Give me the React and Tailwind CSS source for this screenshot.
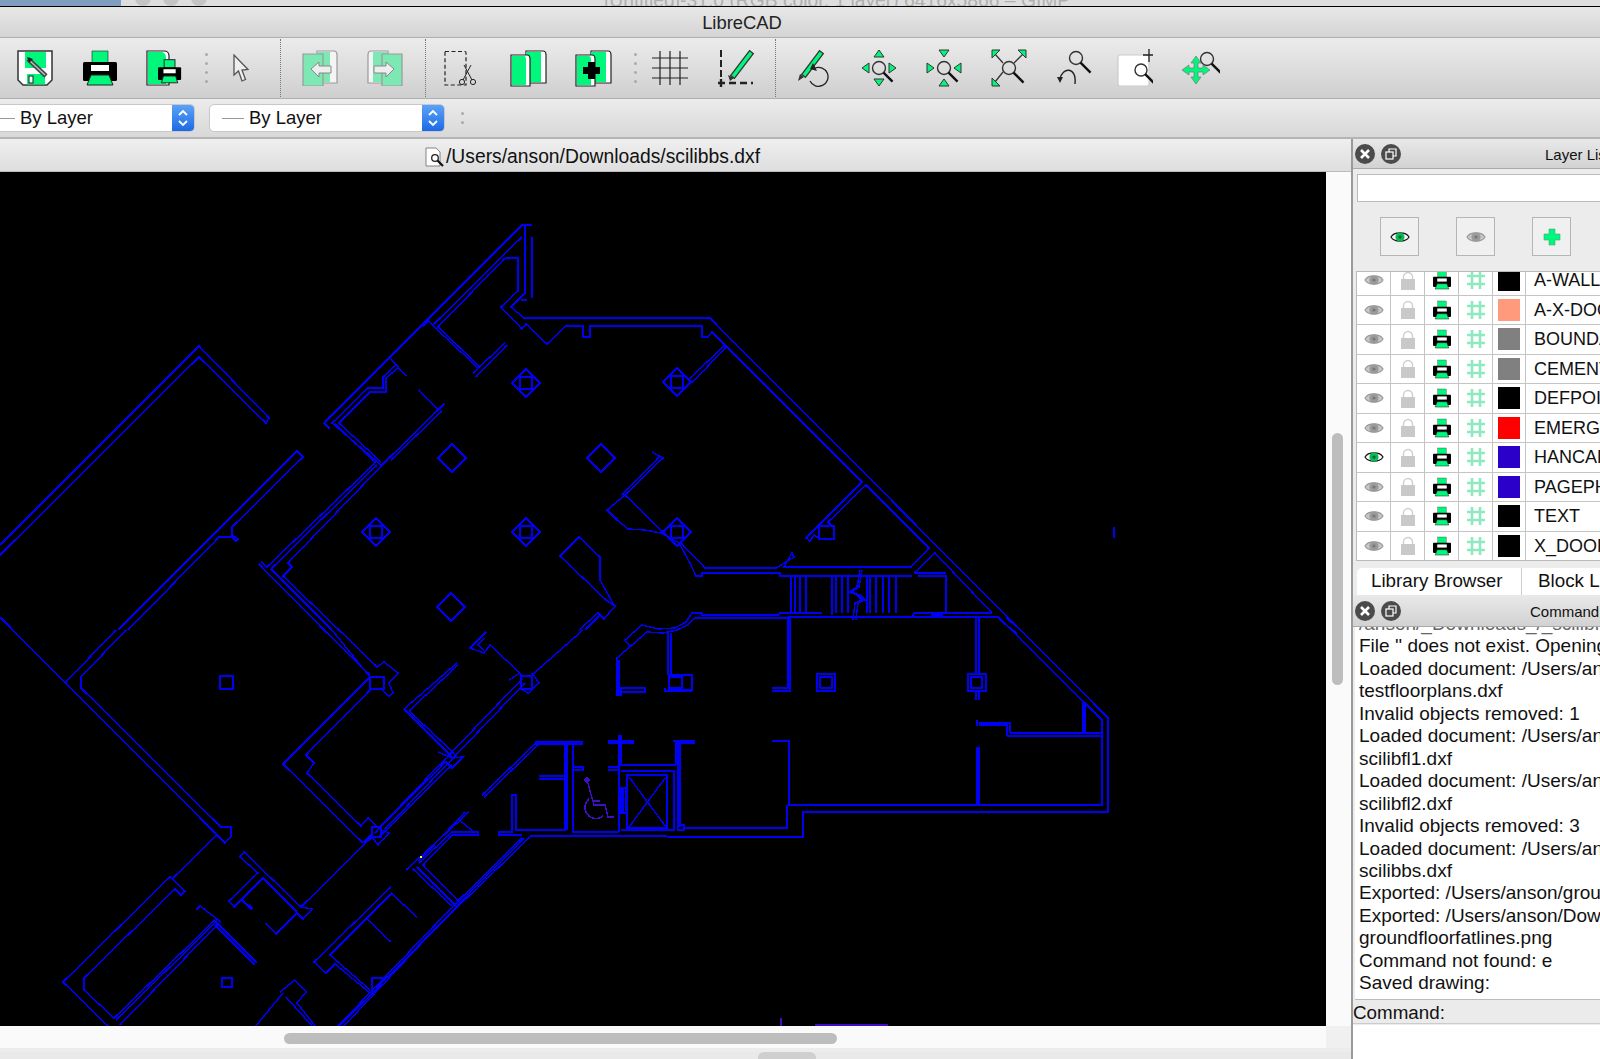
import React from "react";

const G = "#00f77c";
const BLUE = "#0000f2";
const PURPLE = "#3f0fc4";

// floor plan, page coordinates (viewBox starts at the canvas corner)
const WALLS = [
  "M0 545L199 346L269 418L266 423L199 357L0 555",
  "M297 451L118 630M297 451L303 457L232 527V535L238 539L236 541L232 537H219L128 630",
  "M0 617L217 835M65 683L116 630M81 677L126 630M81 677V688L221 827H231V836L225 843L217 835",
  "M217 835L173 878M170 877L63 982L109 1027M170 877L185 891L181 895L175 889L84 978V990L114 1018",
  "M114 1018L215 920M116 1020L217 921M120 1025L219 923M196 910L200 906L221 922M215 925L255 965M217 923L257 963",
  "M522 225L324 423M522 225H532M525 225V293L511 307L524 318H710L1108 718V812H803V837H667",
  "M532 237V298M521 300H527M522 237L433 325",
  "M505 258H518V291L501 307L522 329L526 324L547 344L566 326H583V337H590V326H702V337H708L712 332L862 482L806 538L810 541L814 535L820 539",
  "M505 258L438 327M427 320L478 368M438 327L480 367M473 373L505 343M476 377L507 345M423 326L429 321",
  "M391 359L406 376M396 365L383 377V388H368L332 423L381 465M398 368L386 378V392H370L339 423L381 462M335 424L376 463",
  "M324 423L330 429M419 390L438 410L444 404M438 410L389 458L381 465M442 411L391 460",
  "M375 463L267 567M377 465L271 569M387 460L288 563L292 567L283 576L339 630M259 564L324 630M261 562L267 567M271 569L332 630",
  "M324 630L370 675M332 630L370 677M339 630L377 667L384 662L398 673L389 683L393 693L389 696L381 689",
  "M370 677H384V689H370ZM370 677L283 764L363 843M372 688L306 755L314 763L307 773L361 826L368 818L379 828",
  "M372 827H381V837H372ZM381 830L389 833L378 845L372 837M363 843L372 834",
  "M379 828L522 679M385 829L525 683M532 675L583 630M521 676H532V689H521ZM509 680L520 673M532 673L539 683L528 693L521 689",
  "M486 632L470 648L484 653L490 645L522 675M484 638L478 645L484 650",
  "M579 630L598 613L604 619L615 606L606 600L560 556L579 537L600 557V580L614 605M585 630L600 615",
  "M482 795L537 742M484 797L539 744M404 709L457 663M409 711L458 665M404 709L452 757M409 711L456 755",
  "M438 752L452 758L463 757L452 768L446 762M446 761L375 833M452 765L379 837",
  "M372 837L301 907L244 852L240 857L258 873L229 901L234 907L263 878L297 912M301 907L312 909L303 919L297 913L276 934L266 923M242 900L252 910M249 905L253 909",
  "M469 812L406 870M465 812L419 861M452 832H478V835H452L423 865M459 820L473 831M452 832L419 863",
  "M417 867L457 907M423 865L459 902M413 869L452 906",
  "M530 837L436 928L343 1027M522 838L459 900L337 1027M524 838L461 902L339 1027",
  "M391 887L314 962L326 973L335 964L370 993M392 893L330 955L370 990M391 893L417 917M366 918L391 942M372 993V978H385",
  "M295 980L306 992L297 1003L316 1027M280 992L295 980M283 993L255 1027M286 997L313 1027",
  "M688 380L725 345M692 383L726 347M866 485L828 522L832 526M819 526H834V539H819Z",
  "M866 485L929 548L911 567H784L792 553L794 557L776 568H705L681 543",
  "M935 553L914 573M935 553L992 613M912 576H780V573H702V576H696L690 563L679 543L661 533L645 530L628 529L617 520L607 510L625 495L663 458L652 452",
  "M622 495L660 456M625 495L663 532M616 517L618 521",
  "M992 613H914L912 617M822 613H780L778 615H702V613H692L686 622L675 628L658 629L642 625L625 640L631 647",
  "M694 618H788M694 618L688 625L677 630L663 633L647 632L617 658V695H621V688H645V692H621M619 660V695",
  "M668 633V675M671 633V675M669 675H692V690H669ZM669 677H682V688H669ZM665 688V691H692",
  "M817 674H835V691H817ZM820 677H832V688H820ZM968 674H986V691H968ZM971 677H982V688H971Z",
  "M976 617V674M979 617V674M976 691V700M979 691V700M788 618V688H772M790 617V691H772M788 617H998L1102 720V805H789V741H772M787 805V828H684",
  "M914 573H946M918 576H946V613M931 615H943M1002 622L1017 633M1006 618L1021 630",
  "M832 576V615M860 570L857 587L849 592L857 595L862 600L855 603L853 620M862 570L859 587L852 592L860 595L865 600L858 603L856 620",
  "M791 576V613M795 576V613M800 576V613M806 576V613M836 576V613M842 576V613M848 576V613M867 576V613M870 576V613M876 576V613M883 576V613M889 576V613M896 576V613",
  "M1083 702V733M1085 703L1102 720M1085 703V733M1010 733H1102M1007 736H1102M977 720V726M979 723H1010V733M979 725H1007V736M977 747V805M979 747V805",
  "M530 836H667M535 742H583M535 744H583M565 742V830H516V795H512V832H499V835H522M567 742V830M539 776H565M539 779H565",
  "M573 742V832H619M573 767H583V770H573M619 735V832M621 735V765H676M608 741H634M608 743H634M608 767H619M608 770H619",
  "M676 742V765M680 742V827M678 742V827M673 741H695M680 743H695M621 771H674V830H621M627 775H667V828H627Z",
  "M629 777L666 827M666 777L629 827M621 788H626V813H621ZM623 788V813M678 825H684V830H678ZM684 828H787",
];

const Canvas = () => (
  <svg viewBox="0 172 1326 854" className="block h-[854px] w-[1326px] bg-black" shapeRendering="crispEdges" fill="none">
    <path d={WALLS.join("")} stroke={BLUE} strokeWidth="1.5" />
    {[[526, 383], [376, 532], [526, 532], [677, 382], [677, 532]].map(([x, y]) => (
      <g key={x + "-" + y} stroke={BLUE} strokeWidth="1.5">
        <path d={`M${x} ${y - 14}L${x + 14} ${y}L${x} ${y + 14}L${x - 14} ${y}Z`} />
        <rect x={x - 6} y={y - 6} width="12" height="12" strokeWidth="1.6" />
      </g>
    ))}
    {[[452, 458], [601, 458], [451, 607]].map(([x, y]) => (
      <path key={x} d={`M${x} ${y - 14}L${x + 14} ${y}L${x} ${y + 14}L${x - 14} ${y}Z`} stroke={BLUE} strokeWidth="1.5" />
    ))}
    <rect x="220" y="676" width="13" height="13" stroke={BLUE} strokeWidth="1.5" />
    <rect x="222" y="978" width="10" height="9" stroke={BLUE} strokeWidth="1.5" />
    <path d="M1114 527V538" stroke={BLUE} strokeWidth="1.3" />
    <g stroke={PURPLE} strokeWidth="1.4">
      <path d="M587 780L592 798L594 805H605L608 817H614M592 801H600" />
      <path d="M589 799A11 11 0 1 0 603 816" />
      <circle cx="587" cy="780" r="2" fill={PURPLE} />
      <path d="M781 1018V1026M815 1025H888" />
    </g>
    <rect x="420" y="856" width="1.5" height="1.5" fill="#ffff00" />
  </svg>
);

const PrinterIcon = ({ className }) => (
  <svg viewBox="0 0 34 36" className={className}>
    <rect x="9" y="1" width="16" height="12" fill={G} stroke="#222" strokeWidth="0.6" />
    <rect x="0" y="12" width="34" height="19" rx="1.5" fill="#000" />
    <rect x="8" y="15" width="18" height="6" fill="#fff" />
    <path d="M8 25H26L30 35H4Z" fill={G} stroke="#222" strokeWidth="1" />
  </svg>
);

const SaveIcon = () => (
  <svg viewBox="0 0 36 36" className="h-[36px] w-[36px]">
    <path d="M1 1H35V30L30 35H6L1 30Z" fill="#fff" stroke="#333" strokeWidth="1.5" />
    <rect x="8" y="2" width="21" height="16" fill={G} />
    <rect x="10" y="24" width="18" height="10.5" fill={G} />
    <rect x="12" y="26" width="4" height="7" fill="#fff" stroke="#222" />
    <path d="M11 9L29 26" stroke="#444" strokeWidth="4.5" />
    <path d="M12 10L28 25" stroke="#bbb" strokeWidth="1.5" />
    <path d="M10 7L16 9L12 13Z" fill="#222" />
  </svg>
);

const PreviewIcon = () => (
  <svg viewBox="0 0 36 36" className="h-[36px] w-[36px]">
    <path d="M1 1H18Q23 1 23 6V35H1Z" fill="#fff" stroke="#222" strokeWidth="1.2" />
    <path d="M2 2H16Q20 3 20 8V34H2Z" fill={G} />
    <g transform="translate(12 9) scale(0.68)">
      <rect x="9" y="1" width="16" height="12" fill={G} stroke="#222" strokeWidth="1.4" />
      <rect x="0" y="12" width="34" height="19" rx="1.5" fill="#000" />
      <rect x="8" y="15" width="18" height="6" fill="#fff" />
      <path d="M8 25H26L29 35H5Z" fill={G} stroke="#222" strokeWidth="1.4" />
    </g>
  </svg>
);

const CursorIcon = () => (
  <svg viewBox="0 0 16 28" className="h-[28px] w-[16px]">
    <path d="M1 1V21L5.5 17L9 27L12.5 25.5L9 16L15 15.5Z" fill="#eee" stroke="#555" strokeWidth="1.3" />
  </svg>
);

const PrevIcon = ({ flip }) => (
  <svg viewBox="0 0 36 36" className="h-[36px] w-[36px]">
    <g transform={flip ? "translate(36 0) scale(-1 1)" : undefined}>
      <path d="M15 1H32Q35 1 35 5V33H15Z" fill="#f4f4f4" stroke="#999" strokeWidth="1.2" />
      <path d={flip ? "M15 2H30V32H15Z" : "M15 2H28V32H15Z"} fill="#7ee8b4" />
      <path d="M1 4H21V36H1Z" fill="#7ee8b4" stroke="#999" strokeWidth="1.2" />
      <path d="M9 19L17 12V16H29V23H17V27Z" fill="#eee" stroke="#888" />
    </g>
  </svg>
);

const CutIcon = () => (
  <svg viewBox="0 0 36 36" className="h-[36px] w-[36px]">
    <path d="M1 1.5H21Q22 1.5 22 3V35H1Z" fill="none" stroke="#222" strokeWidth="1.2" strokeDasharray="4 2.5" />
    <path d="M20 15L28 30M27 15L19 30" stroke="#222" strokeWidth="1" />
    <circle cx="18" cy="32" r="2.6" fill="none" stroke="#222" />
    <circle cx="29" cy="32" r="2.6" fill="none" stroke="#222" />
  </svg>
);

const CopyIcon = ({ plus }) => (
  <svg viewBox="0 0 37 37" className="h-[37px] w-[37px]">
    <path d="M16 1H33Q36 1 36 5V33H16Z" fill="#fff" stroke="#222" strokeWidth="1.2" />
    <path d="M16 2H31V32H16Z" fill={G} />
    <path d="M1 5H17Q20 5 20 9V36H1Z" fill="#fff" stroke="#222" strokeWidth="1.2" />
    <path d="M2 6H14Q16 6 16 10V35H2Z" fill={G} />
    {plus && <path d="M13 12H20V17H25V24H20V29H13V24H8V17H13Z" fill="#000" />}
  </svg>
);

const GridIcon = () => (
  <svg viewBox="0 0 36 36" className="h-[36px] w-[36px]" stroke="#222" strokeWidth="1.2">
    <path d="M8 1V35M18 1V35M28 1V35M0 8H36M0 18H36M0 28H36" />
  </svg>
);

const Pencil = ({ d = "M14 27L32 4" }) => (
  <g>
    <path d={d} stroke="#333" strokeWidth="6" strokeLinecap="square" />
    <path d={d} stroke={G} strokeWidth="3.4" strokeLinecap="square" />
  </g>
);

const DraftIcon = () => (
  <svg viewBox="0 0 38 38" className="h-[38px] w-[38px]" fill="none">
    <Pencil d="M17 26L33 5" />
    <path d="M11 26L13 32L17 29Z" fill="#333" />
    <path d="M4 1V29" stroke="#222" strokeWidth="2" strokeDasharray="7 3" />
    <path d="M1 34H8M4 30V38" stroke="#222" strokeWidth="2.4" />
    <path d="M12 34H36" stroke="#222" strokeWidth="2.4" strokeDasharray="7 4" />
  </svg>
);

const RotateIcon = () => (
  <svg viewBox="0 0 36 38" className="h-[38px] w-[36px]" fill="none">
    <Pencil d="M8 25L23 5" />
    <path d="M1 32L3 25L7 28Z" fill="#333" />
    <path d="M18 19A9.5 9.5 0 1 1 13 32" stroke="#222" strokeWidth="1.3" />
    <path d="M16 14L20 22L13 20Z" fill="#222" />
  </svg>
);

const Glass = ({ x, y, r = 6, len = 10 }) => (
  <g fill="none">
    <circle cx={x} cy={y} r={r} stroke="#333" strokeWidth="1.4" />
    <path d={`M${x + r * 0.7} ${y + r * 0.7}l${len} ${len}`} stroke="#111" strokeWidth="2.4" />
  </g>
);

const Tri = ({ d }) => <path d={d} fill={G} stroke="#333" strokeWidth="1" />;

const ZoomInIcon = () => (
  <svg viewBox="0 0 36 38" className="h-[38px] w-[36px]">
    <Glass x={18} y={19} r={6.5} len={9} />
    <Tri d="M18 1L23 8H13Z" />
    <Tri d="M18 37L13 30H23Z" />
    <Tri d="M1 19L8 14V24Z" />
    <Tri d="M35 19L28 14V24Z" />
  </svg>
);

const ZoomOutIcon = () => (
  <svg viewBox="0 0 36 38" className="h-[38px] w-[36px]">
    <Glass x={18} y={19} r={6.5} len={9} />
    <Tri d="M13 1H23L18 8Z" />
    <Tri d="M13 37H23L18 30Z" />
    <Tri d="M1 14L8 19L1 24Z" />
    <Tri d="M35 14L28 19L35 24Z" />
  </svg>
);

const ZoomAutoIcon = () => (
  <svg viewBox="0 0 38 38" className="h-[38px] w-[38px]">
    <path d="M5 5L13 14M33 5L24 14M5 33L13 23" stroke="#333" strokeWidth="1.3" />
    <Glass x={19} y={19} r={6.5} len={10} />
    <Tri d="M2 1H10L2 9Z" />
    <Tri d="M36 1H28L36 9Z" />
    <Tri d="M2 37V29L10 37Z" />
  </svg>
);

const ZoomPrevIcon = () => (
  <svg viewBox="0 0 36 38" className="h-[38px] w-[36px]" fill="none">
    <Glass x={20} y={9} r={6.5} len={10} />
    <path d="M4 30C6 18 21 17 19 35" stroke="#222" strokeWidth="1.4" />
    <path d="M1 28H7L4 34Z" fill="#222" />
  </svg>
);

const ZoomWinIcon = () => (
  <svg viewBox="0 0 36 38" className="h-[38px] w-[36px]">
    <rect x="1" y="6" width="31" height="31" rx="2" fill="#fff" stroke="#ccc" strokeWidth="1.2" />
    <Glass x={24} y={21} r={6} len={9} />
    <path d="M32 0V13M26 6H36" stroke="#222" strokeWidth="1.3" />
  </svg>
);

const ZoomPanIcon = () => (
  <svg viewBox="0 0 38 38" className="h-[38px] w-[38px]">
    <Glass x={25} y={10} r={6.5} len={11} />
    <path d="M14 7L19 14H16V19H21V16L28 21L21 26V23H16V28H19L14 35L9 28H12V23H7V26L0 21L7 16V19H12V14H9Z" fill={G} stroke="#777" strokeWidth="0.7" />
  </svg>
);

const Slot = ({ className, children }) => <div className={`flex shrink-0 items-center justify-center ${className}`}>{children}</div>;

const DotSep = ({ className }) => (
  <div className={`flex shrink-0 justify-center ${className}`}>
    <div className="h-[58px] border-l border-dotted border-[#777]" />
  </div>
);

const GripSep = ({ className }) => (
  <div className={`flex shrink-0 flex-col items-center justify-center gap-[6px] ${className}`}>
    {[0, 1, 2, 3].map((i) => <span key={i} className="h-[3px] w-[3px] rounded-full bg-[#aaa]" />)}
  </div>
);

const Toolbar = () => (
  <div className="flex h-[61px] items-center border-b border-[#aeaeae] bg-gradient-to-b from-[#ececec] to-[#cfcfcf] pl-[3px]">
    <Slot className="w-[64px]"><SaveIcon /></Slot>
    <Slot className="w-[66px]"><PrinterIcon className="h-[36px] w-[34px]" /></Slot>
    <Slot className="w-[62px]"><PreviewIcon /></Slot>
    <GripSep className="w-[22px]" />
    <Slot className="w-[48px]"><CursorIcon /></Slot>
    <DotSep className="w-[30px]" />
    <Slot className="w-[50px]"><PrevIcon /></Slot>
    <Slot className="w-[80px]"><PrevIcon flip /></Slot>
    <DotSep className="w-[1px]" />
    <Slot className="w-[71px]"><CutIcon /></Slot>
    <Slot className="w-[62px]"><CopyIcon /></Slot>
    <Slot className="w-[68px]"><CopyIcon plus /></Slot>
    <GripSep className="w-[16px]" />
    <Slot className="w-[54px]"><GridIcon /></Slot>
    <Slot className="w-[78px]"><DraftIcon /></Slot>
    <DotSep className="w-[1px]" />
    <Slot className="w-[77px]"><RotateIcon /></Slot>
    <Slot className="w-[52px]"><ZoomInIcon /></Slot>
    <Slot className="w-[78px]"><ZoomOutIcon /></Slot>
    <Slot className="w-[52px]"><ZoomAutoIcon /></Slot>
    <Slot className="w-[78px]"><ZoomPrevIcon /></Slot>
    <Slot className="w-[44px]"><ZoomWinIcon /></Slot>
    <Slot className="w-[88px]"><ZoomPanIcon /></Slot>
  </div>
);

const Chevrons = () => (
  <svg viewBox="0 0 14 22" className="h-[22px] w-[14px]" fill="none" stroke="#fff" strokeWidth="1.8">
    <path d="M3 8L7 4L11 8M3 14L7 18L11 14" />
  </svg>
);

const ComboBox = ({ className, lineClass }) => (
  <div className={`flex h-[28px] items-stretch overflow-hidden border border-[#c8c8c8] bg-white ${className}`}>
    <div className="flex flex-1 items-center">
      <span className={`h-[1px] bg-[#999] ${lineClass}`} />
      <span className="ml-[5px] text-[18.5px] leading-none text-[#111]">By Layer</span>
    </div>
    <div className="flex w-[22px] items-center justify-center bg-gradient-to-b from-[#5aa2f7] to-[#1c6ae4]">
      <Chevrons />
    </div>
  </div>
);

const OptionBar = () => (
  <div className="flex h-[40px] items-center border-b-2 border-[#b5b5b5] bg-gradient-to-b from-[#ececec] to-[#d8d8d8]">
    <ComboBox className="w-[195px] rounded-r-[5px] border-l-0" lineClass="w-[15px]" />
    <ComboBox className="ml-[14px] w-[236px] rounded-[5px]" lineClass="ml-[12px] w-[22px]" />
    <div className="ml-[16px] flex flex-col gap-[6px]">
      <span className="h-[3px] w-[3px] rounded-full bg-[#aaa]" />
      <span className="h-[3px] w-[3px] rounded-full bg-[#aaa]" />
    </div>
  </div>
);

const DocIcon = () => (
  <svg viewBox="0 0 20 20" className="h-[20px] w-[20px]">
    <path d="M1 1H11L15 5V19H1Z" fill="#fff" stroke="#777" strokeWidth="0.9" />
    <circle cx="10" cy="11" r="3.3" fill="#fff" stroke="#222" strokeWidth="1.3" />
    <path d="M12.5 13.5L18 19" stroke="#111" strokeWidth="2.2" />
  </svg>
);

const EyeIcon = ({ on, className = "h-[16px] w-[20px]" }) => (
  <svg viewBox="0 0 20 14" className={className}>
    <path d="M1 7C4 1.5 16 1.5 19 7C16 12.5 4 12.5 1 7Z" fill={on ? "#fff" : "#c8c8c8"} stroke={on ? "#111" : "#999"} strokeWidth="1.2" />
    <circle cx="10" cy="7" r="4.6" fill={on ? "#0cb855" : "#9a9a9a"} />
    <circle cx="10" cy="7" r="1.6" fill={on ? "#063" : "#777"} />
  </svg>
);

const LockIcon = () => (
  <svg viewBox="0 0 16 19" className="h-[19px] w-[16px]" fill="none">
    <path d="M3.5 9V6A4.5 4.5 0 0 1 12.5 6V9" stroke="#cfcfcf" strokeWidth="1.4" />
    <rect x="1" y="8" width="14" height="11" fill="#c9c9c9" />
  </svg>
);

const HashIcon = () => (
  <svg viewBox="0 0 20 20" className="h-[20px] w-[20px]" stroke="#8fe9c0" strokeWidth="2.6">
    <path d="M6 1V19M14 1V19M1 6H19M1 14H19" />
  </svg>
);

const DockHead = ({ title, titleClass, className }) => (
  <div className={`flex items-center overflow-hidden border-b border-[#aaa] bg-gradient-to-b from-[#e9e9e9] to-[#d2d2d2] pl-[2px] ${className}`}>
    <span className="flex h-[20px] w-[20px] shrink-0 items-center justify-center rounded-full bg-[#4b4b4b]">
      <svg viewBox="0 0 12 12" className="h-[12px] w-[12px]" stroke="#fff" strokeWidth="2.6">
        <path d="M2 2L10 10M10 2L2 10" />
      </svg>
    </span>
    <span className="ml-[6px] flex h-[20px] w-[20px] shrink-0 items-center justify-center rounded-full bg-[#4b4b4b]">
      <svg viewBox="0 0 12 12" className="h-[12px] w-[12px]" fill="none" stroke="#fff" strokeWidth="1.2">
        <rect x="1" y="4" width="7" height="7" />
        <path d="M4 4V1H11V8H8" />
      </svg>
    </span>
    <span className={`mt-[2px] shrink-0 whitespace-nowrap text-[15px] leading-none text-[#111] ${titleClass}`}>{title}</span>
  </div>
);

const LAYERS = [
  ["A-WALL", "bg-black"],
  ["A-X-DOOR", "bg-[#ff9b7c]"],
  ["BOUNDARY", "bg-[#808080]"],
  ["CEMENT", "bg-[#808080]"],
  ["DEFPOINTS", "bg-black"],
  ["EMERGENCY", "bg-[#ff0000]"],
  ["HANCAP", "bg-[#2b00c8]"],
  ["PAGEPHOTO", "bg-[#2b00c8]"],
  ["TEXT", "bg-black"],
  ["X_DOOR", "bg-black"],
];

const Cell = ({ className, children }) => (
  <div className={`flex h-full shrink-0 items-center justify-center border-r border-[#c4c4c4] ${className}`}>{children}</div>
);

const LayerRow = ({ name, swatch, on }) => (
  <div className="flex h-[29.5px] items-center border-b border-[#c4c4c4]">
    <Cell className="w-[34px]"><EyeIcon on={on} /></Cell>
    <Cell className="w-[34px]"><LockIcon /></Cell>
    <Cell className="w-[34px]"><PrinterIcon className="h-[20px] w-[18px]" /></Cell>
    <Cell className="w-[34px]"><HashIcon /></Cell>
    <Cell className="w-[33px]"><span className={`h-[22px] w-[22px] ${swatch}`} /></Cell>
    <span className="ml-[8px] shrink-0 whitespace-nowrap text-[18px] leading-none text-[#111]">{name}</span>
  </div>
);

const LayerButton = ({ children }) => (
  <div className="flex h-[39px] w-[39px] items-center justify-center border border-[#b5b5b5] bg-[#f0f0f0]">{children}</div>
);

const LOG = [
  "File '' does not exist. Opening",
  "Loaded document: /Users/anson/",
  "testfloorplans.dxf",
  "Invalid objects removed: 1",
  "Loaded document: /Users/anson/",
  "scilibfl1.dxf",
  "Loaded document: /Users/anson/",
  "scilibfl2.dxf",
  "Invalid objects removed: 3",
  "Loaded document: /Users/anson/",
  "scilibbs.dxf",
  "Exported: /Users/anson/ground",
  "Exported: /Users/anson/Downloads/",
  "groundfloorfatlines.png",
  "Command not found: e",
  "Saved drawing:",
];

const Dock = () => (
  <div className="flex w-[247px] flex-col overflow-hidden bg-[#ececec]">
    <DockHead title="Layer List" titleClass="ml-[144px]" className="h-[30px] shrink-0" />
    <div className="ml-[4px] mt-[5px] h-[28px] shrink-0 border border-r-0 border-[#bbb] bg-white" />
    <div className="flex h-[69px] shrink-0 items-center pl-[27px]">
      <LayerButton><EyeIcon on /></LayerButton>
      <div className="ml-[37px]"><LayerButton><EyeIcon /></LayerButton></div>
      <div className="ml-[37px]">
        <LayerButton>
          <svg viewBox="0 0 18 18" className="h-[18px] w-[18px]">
            <path d="M6 1H12V6H17V12H12V17H6V12H1V6H6Z" fill={G} stroke="#4aa878" strokeWidth="0.6" />
          </svg>
        </LayerButton>
      </div>
    </div>
    <div className="ml-[3px] h-[290px] shrink-0 overflow-hidden border border-r-0 border-[#bbb] bg-white">
      <div className="-mt-[6px]">
        {LAYERS.map(([name, swatch]) => (
          <LayerRow key={name} name={name} swatch={swatch} on={name === "HANCAP"} />
        ))}
      </div>
    </div>
    <div className="ml-[4px] mt-[7px] flex h-[27px] shrink-0 items-center rounded-tl-[5px] bg-white text-[18.8px] leading-none text-[#111]">
      <span className="flex h-full w-[165px] shrink-0 items-center border-r border-[#ccc] pl-[14px]">Library Browser</span>
      <span className="ml-[16px] whitespace-nowrap">Block List</span>
    </div>
    <DockHead title="Command Line" titleClass="ml-[129px]" className="h-[32px] shrink-0" />
    <div className="ml-[2px] h-[373px] shrink-0 overflow-hidden border-b border-[#bbb] bg-white pl-[4px]">
      <div className="-mt-[14px] whitespace-nowrap text-[19px] leading-[22.45px] text-[#111]">
        <div className="h-[22.45px] text-[#666]">/anson/_Downloads_/_scilibfl.dxf</div>
        {LOG.map((line, i) => <div key={i}>{line}</div>)}
      </div>
    </div>
    <div className="flex h-[24px] shrink-0 items-center border-b border-[#ccc] bg-[#ebebeb] pt-[3px] text-[18.8px] leading-none text-[#111]">Command:</div>
    <div className="mt-[1px] flex-1 bg-white" />
  </div>
);

export default function App() {
  return (
    <div className="flex h-[1059px] w-[1600px] flex-col overflow-hidden bg-[#ececec] font-['Liberation_Sans',Arial,sans-serif]">
      {/* desktop strip behind the window */}
      <div className="flex h-[6px] items-end overflow-hidden bg-[#dedede]">
        <div className="h-full w-[121px] bg-[#7f9fc1]" />
        <span className="ml-[14px] h-[16px] w-[16px] rounded-full bg-[#c4c4c4]" />
        <span className="ml-[12px] h-[16px] w-[16px] rounded-full bg-[#c4c4c4]" />
        <span className="ml-[12px] h-[16px] w-[16px] rounded-full bg-[#c4c4c4]" />
        <span className="ml-[397px] whitespace-nowrap text-[19.3px] leading-[10px] text-[#b0b0b0]">[Untitled]-31.0 (RGB color, 1 layer) 6416x5866 – GIMP</span>
      </div>
      <div className="h-[1px] bg-black" />
      <div className="flex h-[31px] items-center justify-center border-b border-[#aeaeae] bg-gradient-to-b from-[#e8e8e8] to-[#d4d4d4] pr-[116px] pt-[2px] text-[18.4px] leading-none text-[#222]">
        LibreCAD
      </div>
      <Toolbar />
      <OptionBar />
      <div className="flex min-h-0 flex-1">
        <div className="flex w-[1351px] flex-col">
          <div className="flex h-[33px] items-center border-b border-[#bbb] bg-gradient-to-b from-[#efefef] to-[#dedede] pl-[425px] pt-[3px] text-[19.3px] leading-none text-[#111]">
            <DocIcon />
            <span className="ml-[1px]">/Users/anson/Downloads/scilibbs.dxf</span>
          </div>
          <div className="flex h-[854px]">
            <Canvas />
            <div className="w-[25px] bg-[#fafafa] pl-[6px] pt-[261px]">
              <div className="h-[252px] w-[11px] rounded-full bg-[#bdbdbd]" />
            </div>
          </div>
          <div className="flex h-[22px] bg-[#fafafa]">
            <div className="w-[1326px] pl-[284px] pt-[7px]">
              <div className="h-[11px] w-[553px] rounded-full bg-[#bdbdbd]" />
            </div>
            <div className="w-[25px] bg-[#f0f0f0]" />
          </div>
          <div className="mt-[4px] flex-1 bg-[#e9e9e9] pl-[758px]">
            <div className="h-full w-[58px] rounded-t-[6px] bg-[#cfcfcf]" />
          </div>
        </div>
        <div className="w-[2px] bg-[#9a9a9a]" />
        <Dock />
      </div>
    </div>
  );
}
